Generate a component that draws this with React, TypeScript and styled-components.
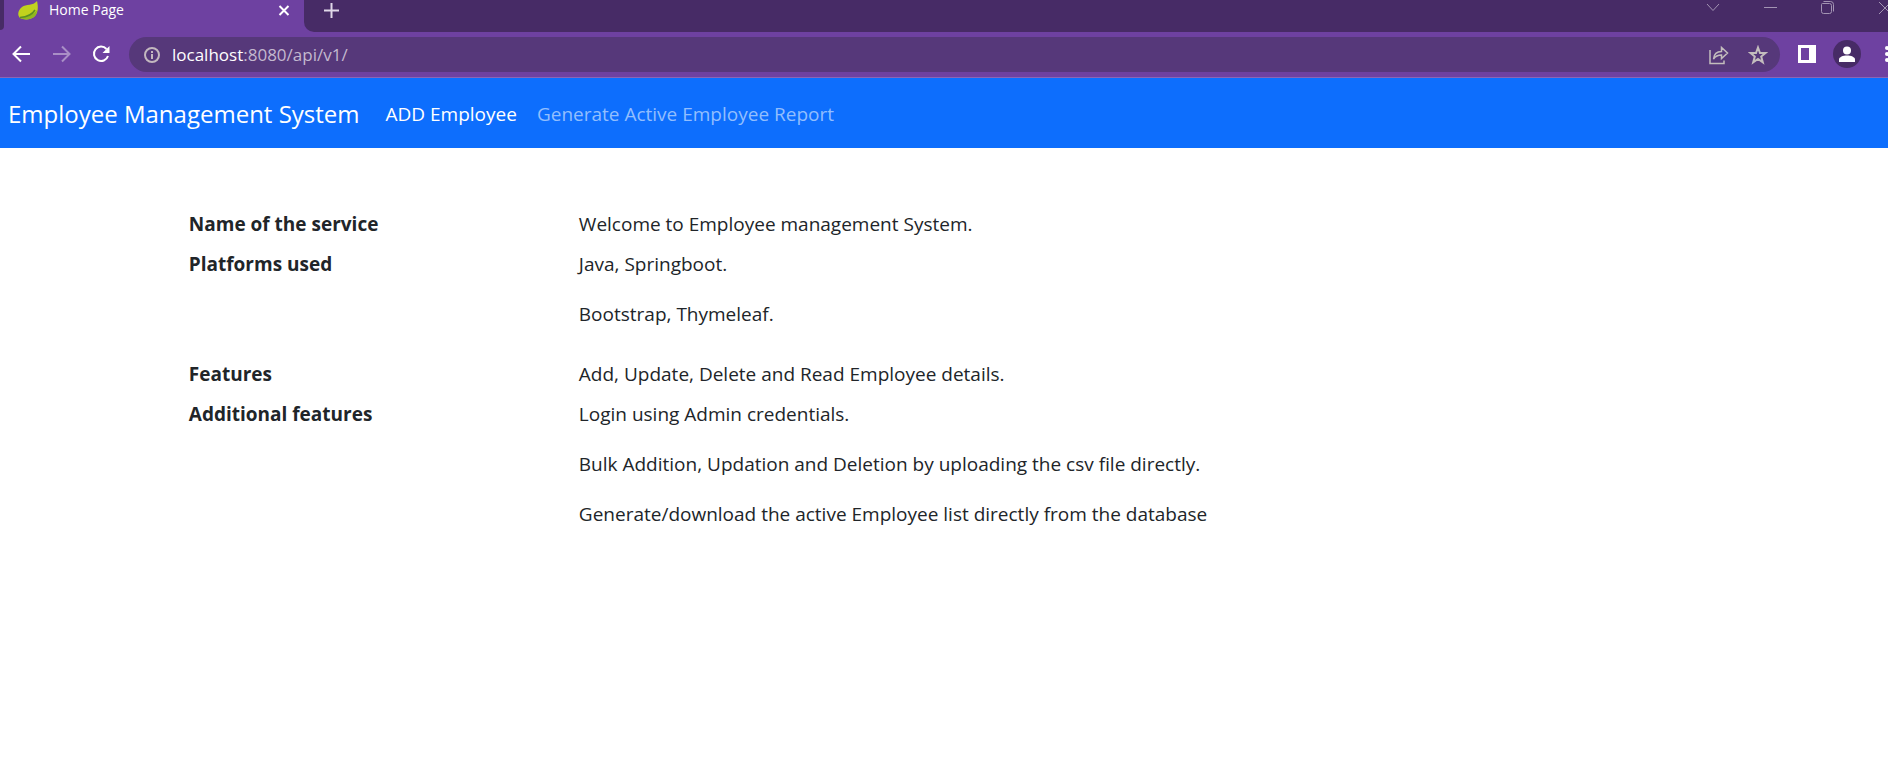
import React from "react";
import styled, { createGlobalStyle } from "styled-components";

const GlobalStyle = createGlobalStyle`
  * { box-sizing: border-box; }
  body {
    margin: 0;
    background: #fff;
    color: #212529;
    font-family: "Segoe UI", "Open Sans", "Noto Sans", sans-serif;
    font-size: 19px;
    line-height: 30px;
    overflow-x: hidden;
  }
`;

const BrowserChrome = styled.header`
  background: #6e41a1;
  border-bottom: 1px solid #8a66b5;
  overflow: hidden;
`;

const TabStrip = styled.div`
  display: flex;
  height: 32px;
`;

const PreviousTab = styled.div`
  width: 4px;
  height: 30px;
  background: #472b66;
  border-bottom-right-radius: 4px;
`;

const ActiveTab = styled.div`
  display: flex;
  align-items: center;
  width: 300px;
  padding: 0 12px 12px 14px;
  gap: 10px;
  color: #fff;
  font-size: 14px;
  line-height: 20px;
`;

const TabTitle = styled.span`
  flex: 1;
  white-space: nowrap;
`;

const StripRest = styled.div`
  flex: 1;
  display: flex;
  justify-content: space-between;
  background: #472b66;
  border-bottom-left-radius: 10px;
  padding: 0 0 12px 18px;
`;

const WindowControls = styled.div`
  display: flex;
  gap: 37px;
  margin-right: -6px;
  padding-bottom: 6px;
`;

const IconButton = styled.button<{ $color?: string }>`
  display: flex;
  flex: none;
  align-items: center;
  justify-content: center;
  padding: 0;
  border: 0;
  background: none;
  color: ${(p) => p.$color ?? "#fff"};
`;

const Toolbar = styled.div`
  display: flex;
  align-items: center;
  height: 45px;
  padding-left: 11px;
`;

const NavButtons = styled.div`
  display: flex;
  gap: 20px;
  padding-bottom: 1px;
`;

const AddressBar = styled.div`
  flex: 1;
  display: flex;
  align-items: center;
  gap: 18px;
  height: 35px;
  margin: 0 16px 0 18px;
  padding: 0 12px 0 14px;
  border-radius: 18px;
  background: #56387a;
  color: #c3b8cf;
  font-size: 17px;
  line-height: 24px;
`;

const Address = styled.div`
  flex: 1;
  margin-left: -7px;
`;

const Host = styled.span`
  color: #fff;
`;

const ToolbarEnd = styled.div`
  display: flex;
  align-items: center;
  gap: 15px;
  margin-right: -8px;
  padding-bottom: 1px;
`;

const MenuButton = styled.span`
  display: flex;
  margin-left: 4px;
  margin-right: -4px;
`;

const Avatar = styled(IconButton)`
  width: 28px;
  height: 28px;
  border-radius: 50%;
  background: #472b66;
`;

const Navbar = styled.nav`
  display: flex;
  align-items: center;
  min-height: 70px;
  padding: 2px 8px 0;
  background: #0d6efd;
`;

const Brand = styled.a`
  margin-right: 26px;
  color: #fff;
  font-size: 24px;
  text-decoration: none;
  white-space: nowrap;
`;

const NavLink = styled.a<{ $active?: boolean }>`
  margin-right: 20px;
  color: ${(p) => (p.$active ? "#fff" : "#92befe")};
  text-decoration: none;
  white-space: nowrap;
`;

const Details = styled.dl`
  display: grid;
  grid-template-columns: 1fr 3fr;
  row-gap: 10px;
  margin: 0;
  padding: 61px 139px 40px 10%;
`;

const Term = styled.dt`
  font-weight: 700;
`;

const Description = styled.dd`
  margin: 0;
`;

const Paragraph = styled.p`
  margin: 20px 0 0;
`;

const SpacedDescription = styled(Description)`
  padding-bottom: 20px;
`;

const Line = ({ size, d, width = 2 }: { size: number; d: string; width?: number }) => (
  <svg width={size} height={size} viewBox={`0 0 ${size} ${size}`} fill="none" stroke="currentColor" strokeWidth={width} aria-hidden="true">
    <path d={d} />
  </svg>
);

const Leaf = () => (
  <svg width="21" height="20" viewBox="0 0 21 20" aria-hidden="true">
    <path d="M19 1C20 5 21 13 16 17C12 20 6 20 2 18C-1 15 0 10 4 7C8 4 15 6 19 1Z" fill="#c1d21d" />
    <path d="M19 10C16 14 10 17 3 17L2 18C6 20 12 20 16 17C18 15 19 13 19 10Z" fill="#8fb820" />
    <path d="M2 17.500C9 17 14 15 17 10" stroke="#5b8f22" strokeWidth="1.500" fill="none" />
  </svg>
);

export default function App() {
  return (
    <>
      <GlobalStyle />
      <BrowserChrome>
        <TabStrip>
          <PreviousTab />
          <ActiveTab>
            <Leaf />
            <TabTitle>Home Page</TabTitle>
            <IconButton aria-label="Close tab">
              <Line size={16} d="M3.500 4L12.500 13M12.500 4L3.500 13" />
            </IconButton>
          </ActiveTab>
          <StripRest>
            <IconButton aria-label="New tab" $color="#e0d8e8">
              <Line size={20} d="M9.500 3V18M2 10.500H17" />
            </IconButton>
            <WindowControls>
              <IconButton aria-label="Search tabs" $color="#a394b3">
                <Line size={20} width={1} d="M4 7L10 13.500L16 7" />
              </IconButton>
              <IconButton aria-label="Minimize" $color="#a394b3">
                <Line size={20} width={1} d="M4 10.500H17" />
              </IconButton>
              <IconButton aria-label="Restore" $color="#a394b3">
                <Line size={20} width={1} d="M5.500 6.500H12.500Q14.500 6.500 14.500 8.500V14.500Q14.500 16.500 12.500 16.500H6.500Q4.500 16.500 4.500 14.500V7.500Q4.500 6.500 5.500 6.500M6.500 4.500H13.500Q16.500 4.500 16.500 7.500V14.500" />
              </IconButton>
              <IconButton aria-label="Close window" $color="#a394b3">
                <Line size={20} width={1} d="M5 5L17 17M17 5L5 17" />
              </IconButton>
            </WindowControls>
          </StripRest>
        </TabStrip>
        <Toolbar>
          <NavButtons>
            <IconButton aria-label="Back">
              <Line size={20} d="M19 10H3M10 2.500L2.500 10L10 17.500" />
            </IconButton>
            <IconButton aria-label="Forward" $color="#a98fc6">
              <Line size={20} d="M2 10H18M11 2.500L18.500 10L11 17.500" />
            </IconButton>
            <IconButton aria-label="Reload">
              <svg width="20" height="20" viewBox="0 0 20 20" fill="none" aria-hidden="true">
                <path d="M15.500 5A7.200 7.200 0 1 0 17 12" stroke="currentColor" strokeWidth="2" />
                <path d="M18.500 2V9H11.500Z" fill="currentColor" />
              </svg>
            </IconButton>
          </NavButtons>
          <AddressBar>
            <IconButton aria-label="View site information" $color="#c3b8bf">
              <Line size={18} d="M9 2A7 7 0 1 1 9 16A7 7 0 1 1 9 2M9 8V13M9 5V7" />
            </IconButton>
            <Address>
              <Host>localhost</Host>:8080/api/v1/
            </Address>
            <IconButton aria-label="Share this page" $color="#c3bdbd">
              <svg width="22" height="22" viewBox="0 0 22 22" fill="none" stroke="currentColor" strokeWidth="1.500" aria-hidden="true">
                <path d="M2 6V19.500H16V16.500" />
                <path d="M5.500 15C6 10 9 7.500 13.500 7.500V3.500L19.500 9L13.500 14.500V11C10 11 7.500 12 5.500 15Z" />
              </svg>
            </IconButton>
            <IconButton aria-label="Bookmark this tab" $color="#c3bdbd">
              <Line size={20} d="M10 2.500L12 8H17.500L13.200 11.500L14.800 17.300L10 14L5.200 17.300L6.800 11.500L2.500 8H8Z" />
            </IconButton>
          </AddressBar>
          <ToolbarEnd>
            <IconButton aria-label="Side panel">
              <svg width="22" height="20" viewBox="0 0 22 20" aria-hidden="true">
                <path fillRule="evenodd" fill="currentColor" d="M2 1H20V19H2ZM5 4V16H13V4Z" />
              </svg>
            </IconButton>
            <Avatar aria-label="Profile">
              <svg width="18" height="18" viewBox="0 0 18 18" fill="currentColor" aria-hidden="true">
                <circle cx="9" cy="5.500" r="4" />
                <path d="M1 17V14.500C1 12 5 10.500 9 10.500S17 12 17 14.500V17Z" />
              </svg>
            </Avatar>
            <MenuButton>
              <IconButton aria-label="Browser menu">
                <svg width="20" height="20" viewBox="0 0 20 20" fill="currentColor" aria-hidden="true">
                  <circle cx="7" cy="4" r="2" />
                  <circle cx="7" cy="10" r="2" />
                  <circle cx="7" cy="16" r="2" />
                </svg>
              </IconButton>
            </MenuButton>
          </ToolbarEnd>
        </Toolbar>
      </BrowserChrome>
      <Navbar>
        <Brand href="#">Employee Management System</Brand>
        <NavLink href="#" $active>
          ADD Employee
        </NavLink>
        <NavLink href="#">Generate Active Employee Report</NavLink>
      </Navbar>
      <main>
        <Details>
          <Term>Name of the service</Term>
          <Description>Welcome to Employee management System.</Description>
          <Term>Platforms used</Term>
          <SpacedDescription>
            Java, Springboot.
            <Paragraph>Bootstrap, Thymeleaf.</Paragraph>
          </SpacedDescription>
          <Term>Features</Term>
          <Description>Add, Update, Delete and Read Employee details.</Description>
          <Term>Additional features</Term>
          <Description>
            Login using Admin credentials.
            <Paragraph>Bulk Addition, Updation and Deletion by uploading the csv file directly.</Paragraph>
            <Paragraph>Generate/download the active Employee list directly from the database</Paragraph>
          </Description>
        </Details>
      </main>
    </>
  );
}
